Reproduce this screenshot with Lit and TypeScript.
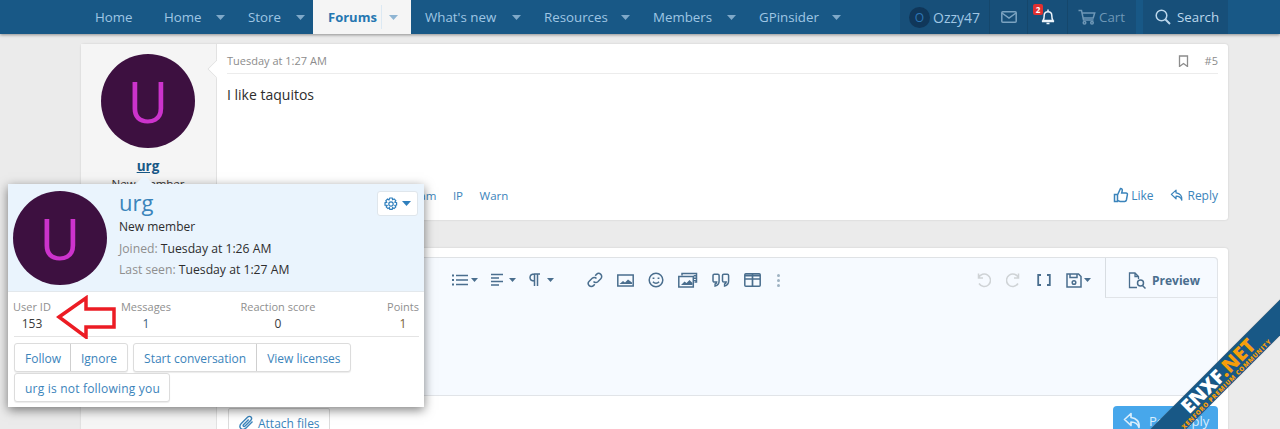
import { LitElement, html, css, svg } from "lit";
import { customElement } from "lit/decorators.js";

const caret = html`<svg class="caret" width="9" height="5" viewBox="0 0 9 5"><path d="M0 0h9L4.5 5z" fill="currentColor"/></svg>`;
const tcaret = html`<svg class="tcaret" width="7" height="4" viewBox="0 0 7 4"><path d="M0 0h7L3.5 4z" fill="currentColor"/></svg>`;
const ic = (w: number, h: number, body: unknown, cls = "") => html`<svg class=${cls} width=${w} height=${h} viewBox="0 0 ${w} ${h}" fill="none" stroke="currentColor" stroke-width="1.5">${body}</svg>`;

const NAV = [
  { t: "Home", w: 39, c: false },
  { t: "Home", w: 38, c: true },
  { t: "Store", w: 34, c: true },
];
const NAV2 = [
  { t: "What's new", w: 73 },
  { t: "Resources", w: 63 },
  { t: "Members", w: 60 },
  { t: "GPinsider", w: 59 },
];

const avatar = () => html`<div class="avatar"><span>U</span></div>`;

@customElement("app-root")
export class AppRoot extends LitElement {
  static styles = css`
    :host { display: block; width: 1280px; height: 429px; overflow: hidden; position: relative; background: #ebebeb; font-family: "Open Sans", "Noto Sans", sans-serif; font-size: 12px; color: #3a3a3a; }
    a { color: #3b84bb; text-decoration: none; }
    svg { display: block; flex: none; }

    nav { height: 34px; background: #185886; display: flex; padding-left: 80px; box-shadow: 0 1px 3px rgba(0,0,0,.4); position: relative; z-index: 1; color: #9fc6e4; font-size: 13.3px; }
    .item { display: flex; align-items: center; padding: 0 15px; white-space: nowrap; }
    .item .lab { display: block; }
    .item .caret { color: #7fa9c9; margin-left: 14px; margin-right: -7px; }
    .active { background: #f5f5f5; color: #2577b1; font-weight: 700; display: flex; align-items: center; width: 98px; padding-left: 15px; box-sizing: border-box; font-size: 13px; margin-right: -1px; }
    .active .sep { width: 1px; height: 24px; background: #dce9f3; margin-left: 4px; }
    .active .caret { color: #8fb5d3; margin-left: 7px; }
    .spacer { flex: 1; }
    .right { display: flex; margin-right: 52px; }
    .acct { display: flex; background: #174f79; height: 34px; margin-right: 7px; color: #9fc6e4; }
    .cell { display: flex; align-items: center; box-sizing: border-box; height: 34px; position: relative; }
    .who { width: 90px; padding-left: 9px; gap: 3px; border-right: 1px solid #15476c; font-size: 14px; }
    .mini { width: 21px; height: 21px; border-radius: 50%; background: #10375a; color: #2e76b6; font-size: 12px; display: flex; align-items: center; justify-content: center; }
    .mail { width: 38px; justify-content: center; color: #7ba3c1; border-right: 1px solid #15476c; }
    .bell { width: 40px; justify-content: center; color: #eef5fb; border-right: 1px solid #15476c; }
    .badge { position: absolute; left: 5px; top: 4px; width: 10px; height: 11px; border-radius: 2px; background: #e03030; color: #fff; font-size: 8px; font-weight: 700; line-height: 11px; text-align: center; }
    .cart { width: 68px; padding-left: 10px; gap: 3px; color: #6e97b6; }
    .search { width: 85px; height: 34px; background: #174f79; display: flex; align-items: center; padding-left: 12px; box-sizing: border-box; gap: 6px; color: #bcd7ec; }

    .card { position: absolute; left: 81px; width: 1147px; background: #fff; display: flex; border-radius: 3px; box-shadow: 0 0 2px rgba(0,0,0,.15); }
    .c1 { top: 44px; height: 176px; }
    .c2 { top: 248px; height: 190px; }
    .side { width: 136px; background: #f5f5f5; border-right: 1px solid #e2e2e2; position: relative; flex: none; display: flex; flex-direction: column; align-items: center; padding: 10px 1px 0 0; box-sizing: border-box; }
    .side::after { content: ""; position: absolute; right: -8px; top: 18px; width: 14px; height: 14px; background: #fff; transform: rotate(45deg); border-left: 1px solid #e2e2e2; border-bottom: 1px solid #e2e2e2; box-sizing: border-box; clip-path: polygon(0 0, 0 100%, 100% 100%); }
    .avatar { border-radius: 50%; background: #3d1040; display: flex; align-items: center; justify-content: center; width: 94px; height: 94px; flex: none; }
    .avatar span { color: #cc33cc; font-size: 56px; line-height: 1; }
    .name { margin-top: 8px; color: #185886; font-weight: 700; font-size: 13.5px; text-decoration: underline; line-height: 20px; }
    .role { font-size: 11.5px; color: #333; line-height: 15px; }
    .body { flex: 1; padding: 0 10px; position: relative; display: flex; flex-direction: column; }
    .attr { display: flex; justify-content: space-between; align-items: center; height: 30px; padding-top: 4px; box-sizing: border-box; border-bottom: 1px solid #ececec; color: #8c8c8c; font-size: 11px; }
    .attr .r { display: flex; align-items: center; gap: 16px; }
    .txt { font-size: 14px; color: #2d2d2d; margin-top: 11px; line-height: 20px; }
    .foot { margin-top: auto; display: flex; justify-content: space-between; align-items: center; height: 20px; margin-bottom: 15px; font-size: 11.5px; color: #3b84bb; }
    .foot .l { display: flex; gap: 16.5px; margin-left: 179px; }
    .foot .rr { display: flex; gap: 17px; font-size: 12px; }
    .foot .a { display: flex; gap: 2px; align-items: center; }

    .editor { position: absolute; left: 146px; top: 10px; width: 991px; height: 138px; border: 1px solid #e1e4e8; border-width: 0 1px 1px 1px; box-sizing: border-box; background: #f6faff; border-radius: 4px 4px 0 0; box-shadow: 0 -1px 0 #dfe2e5; color: #4a6e8e; }
    .bar { position: relative; display: flex; align-items: center; height: 40px; box-sizing: border-box; padding: 4px 0 0 223px; }
    .grp { display: flex; align-items: center; }
    .tb { display: flex; align-items: center; gap: 3px; }
    .tb.wide { gap: 6px; }
    .tcaret { color: #4a6e8e; }
    .g1 { gap: 13px; }
    .g2 { gap: 14px; margin-left: 33px; }
    .dots { display: flex; flex-direction: column; gap: 2px; margin-left: 2px; }
    .dots i { width: 3px; height: 3px; border-radius: 50%; background: #9fb2c2; display: block; }
    .g3 { position: absolute; right: 126px; top: 4px; height: 36px; gap: 15px; }
    .off { color: #cfd3d6; }
    .g3 .tb { gap: 2px; }
    .tab { position: absolute; right: 0; top: 0; width: 112px; height: 40px; padding: 6px 0 0 22px; border-left: 1px solid #d8dde2; border-bottom: 1px solid #e1e4e8; box-sizing: border-box; display: flex; align-items: center; gap: 5px; font-weight: 700; font-size: 12px; color: #4a6e8e; }
    .btns { position: absolute; left: 147px; right: 10px; top: 158px; display: flex; justify-content: space-between; align-items: flex-start; }
    .attach { display: flex; align-items: center; gap: 4px; border: 1px solid #dcdcdc; border-radius: 2px; height: 30px; width: 102px; box-sizing: border-box; padding-left: 10px; margin-top: 2px; color: #3b84bb; font-size: 12px; background: #fff; }
    .post { display: flex; align-items: center; gap: 6px; width: 105px; height: 30px; border-radius: 4px; background: #47a7eb; color: #d9eefc; padding-left: 10px; box-sizing: border-box; font-size: 13px; }

    .pop { position: absolute; left: 8px; top: 184px; width: 416px; height: 223px; background: #fff; box-shadow: 0 3px 10px rgba(0,0,0,.5); display: flex; flex-direction: column; z-index: 2; }
    .pop::before { content: ""; position: absolute; left: 130px; top: -6px; width: 13px; height: 13px; background: #eaf4fd; transform: rotate(45deg); }
    .phead { height: 108px; background: #eaf4fd; border-bottom: 1px solid #e3e8ec; box-sizing: border-box; display: flex; padding: 7px 5px; position: relative; }
    .pinfo { margin-left: 12px; display: flex; flex-direction: column; }
    .pname { color: #3b84bb; font-size: 22px; line-height: 24px; margin-top: -1px; }
    .prole { font-size: 12px; color: #2d2d2d; line-height: 20px; margin-top: 3px; }
    .pline { font-size: 12.2px; line-height: 18px; color: #8f8f8f; margin-top: 3px; }
    .pline b { font-weight: 400; color: #2d2d2d; }
    .gear { position: absolute; right: 6px; top: 7px; width: 41px; height: 25px; border-radius: 3px; background: #fff; border: 1px solid #dfe6ec; box-sizing: border-box; display: flex; align-items: center; justify-content: center; gap: 4px; color: #2f7fbd; }
    .stats { display: flex; margin: 0 5px 0 6px; padding-top: 7px; height: 45px; border-bottom: 1px solid #e4e4e4; box-sizing: border-box; font-size: 11px; color: #8f8f8f; }
    .stat { display: flex; flex-direction: column; align-items: center; line-height: 16px; white-space: nowrap; flex: none; }
    .stat span:last-child { font-size: 12px; color: #3a3a3a; margin-top: 1px; }
    .stat .blue { color: #3a5f80 !important; }
    .stat .gold { color: #7a5f35 !important; }
    .s1 { width: 36px; }
    .s2 { width: 50px; margin-left: 71px; }
    .s3 { width: 76px; margin-left: 69px; }
    .s4 { width: 32px; margin-left: 71px; }
    .rows { margin: 6px 6px 0; display: flex; flex-direction: column; gap: 1px; }
    .row { display: flex; gap: 5px; }
    .bgroup { display: flex; border: 1px solid #dcdcdc; border-radius: 3px; height: 29px; box-sizing: border-box; background: #fff; box-shadow: 0 1px 1px rgba(0,0,0,.08); }
    .bgroup a { display: flex; align-items: center; padding: 2px 10px 0; font-size: 12px; color: #3b84bb; border-right: 1px solid #cfcfcf; white-space: nowrap; }
    .bgroup a:last-child { border: 0; }
    .bgroup a.tight { padding-right: 9px; }
    .bgroup a.wide { letter-spacing: .2px; padding-right: 9px; }
    .bgroup a.end { padding-right: 9px; }

    .arrow { position: absolute; left: 56px; top: 295px; z-index: 3; }

    .ribbon { position: absolute; left: 1105px; top: 365px; width: 230px; height: 25px; background: #185886; transform: rotate(-45deg); z-index: 4; box-shadow: 0 0 1px #555; display: flex; flex-direction: column; align-items: center; font-weight: 800; overflow: hidden; }
    .rib1 { font-size: 19.5px; line-height: 19px; color: #fff; }
    .rib1 span { color: #f59e0b; }
    .rib2 { font-size: 6.3px; line-height: 6px; color: #f59e0b; letter-spacing: .7px; white-space: nowrap; }
  `;

  render() {
    const thumb = ic(16, 16, svg`<path d="M1.5 7.5h3v7h-3zM4.5 8l3-6.5c1.5 0 2 1 1.7 2.3L8.7 6H13c1 0 1.6.8 1.4 1.7l-1 5.3c-.2.9-.8 1.4-1.7 1.4H7l-2.5-1" />`);
    const reply = (w: number, h: number) => html`<svg width=${w} height=${h} viewBox="0 0 20 18" fill="none" stroke="currentColor" stroke-width="1.7" stroke-linejoin="round"><path d="M8 1.5 1.5 7.5 8 13.5V10c4 0 6.5 1 8 5.5.8-5.5-2.5-9.5-8-10z"/></svg>`;
    return html`
      <nav>
        ${NAV.map(n => html`<div class="item"><span class="lab" style="width:${n.w}px">${n.t}</span>${n.c ? caret : ""}</div>`)}
        <div class="active"><span class="lab">Forums</span><span class="sep"></span>${caret}</div>
        ${NAV2.map(n => html`<div class="item"><span class="lab" style="width:${n.w}px">${n.t}</span>${caret}</div>`)}
        <div class="spacer"></div>
        <div class="right">
          <div class="acct">
            <div class="cell who"><span class="mini">O</span><span>Ozzy47</span></div>
            <div class="cell mail">${ic(16, 12, svg`<rect x=".8" y=".8" width="14.4" height="10.4" rx="1"/><path d="M1 2l7 5 7-5"/>`)}</div>
            <div class="cell bell"><span class="badge">2</span>${ic(14, 16, svg`<path d="M2 11.5c1.2-1.5 1.2-3 1.2-5 0-2.2 1.5-3.8 3.8-3.8s3.8 1.6 3.8 3.8c0 2 0 3.5 1.2 5zM1 12.5h12M5.5 14.5h3M7 .5v2"/>`)}</div>
            <div class="cell cart">${ic(18, 16, svg`<path d="M.5 1.5h3l2 9.500h10M4.200 4h12.500l-1.500 5H5.200"/><circle cx="6.500" cy="13.700" r="1.300"/><circle cx="14" cy="13.700" r="1.300"/>`)}<span>Cart</span></div>
          </div>
          <div class="search">${ic(16, 16, svg`<circle cx="6.500" cy="6.500" r="5.300"/><path d="M10.500 10.500 15 15" stroke-width="2"/>`)}<span>Search</span></div>
        </div>
      </nav>

      <section class="card c1">
        <div class="side">
          ${avatar()}
          <a class="name">urg</a>
          <div class="role">New member</div>
        </div>
        <div class="body">
          <div class="attr"><span>Tuesday at 1:27 AM</span><span class="r">${ic(11, 12, svg`<path d="M1.500 1h8v10.500l-4-3-4 3z" stroke-width="1.300"/>`)}<span>#5</span></span></div>
          <div class="txt">I like taquitos</div>
          <div class="foot">
            <div class="l"><a>Spam</a><a>IP</a><a>Warn</a></div>
            <div class="rr"><a class="a">${thumb}Like</a><a class="a">${reply(15, 13)}Reply</a></div>
          </div>
        </div>
      </section>

      <section class="card c2">
        <div class="side"></div>
        <div class="editor">
          <div class="bar">
            <div class="grp g1">
              <span class="tb">${ic(17, 14, svg`<path d="M5 2.500h12M5 7h12M5 11.500h12" stroke-width="1.600"/><path d="M1 2.500h2M1 7h2M1 11.500h2" stroke-width="2.200"/>`)}${tcaret}</span>
              <span class="tb">${ic(15, 14, svg`<path d="M0 1.500h12M0 5h8M0 8.500h12M0 12h8" stroke-width="1.500"/>`)}${tcaret}</span>
              <span class="tb wide">${ic(12, 14, svg`<path d="M5.500 13V1h5.500M8.500 13V1M5.500 8C2.500 8 1 6.500 1 4.500S2.500 1 5.500 1" stroke-width="1.500"/>`)}${tcaret}</span>
            </div>
            <div class="grp g2">
              ${ic(16, 16, svg`<path d="M6.500 9.500a3 3 0 0 0 4.300.2l3-3A3 3 0 0 0 9.500 2.400L8.200 3.700M9.500 6.500a3 3 0 0 0-4.300-.2l-3 3a3 3 0 0 0 4.300 4.300l1.300-1.300"/>`)}
              ${ic(17, 13, svg`<rect x=".8" y="1" width="15.400" height="11"/><path d="M2.500 10l3.500-3 2 1.500 3-3 4 3v1.500z" fill="currentColor" stroke="none"/>`)}
              ${ic(16, 16, svg`<circle cx="8" cy="8" r="6.800"/><path d="M5 9.800c1.500 2 4.500 2 6 0"/><path d="M5.500 5.500v1.500M10.500 5.500v1.500" stroke-width="1.800"/>`)}
              ${ic(20, 16, svg`<rect x=".8" y="4.500" width="14.500" height="10.500"/><path d="M3 13l3.500-3.500 2 1.500 3-3 3 3v2z" fill="currentColor" stroke="none"/><path d="M4 3.500V1.500h14.500v8.500h-2"/><path d="M17 3v6" stroke-dasharray="1.500 1" stroke-width="2.500"/>`)}
              ${ic(18, 14, svg`<path d="M1 2.500c0-.8.600-1.300 1.300-1.300h3.500c.8 0 1.300.5 1.300 1.300V8c0 2.700-1.500 4.500-4 5v-2c1-.3 1.500-.8 1.600-2H2.300C1.600 9 1 8.500 1 7.700zM10.500 2.500c0-.8.600-1.300 1.300-1.300h3.500c.8 0 1.300.5 1.300 1.300V8c0 2.700-1.500 4.500-4 5v-2c1-.3 1.500-.8 1.600-2h-2.400c-.7 0-1.300-.5-1.300-1.300z"/>`)}
              ${ic(17, 14, svg`<rect x=".8" y=".8" width="15.400" height="12.400" rx="1"/><path d="M8.500 1v12M1 6h15" stroke-width="1.700"/><path d="M1 2.500h15" stroke-width="2"/>`)}
              <span class="dots"><i></i><i></i><i></i></span>
            </div>
            <div class="grp g3">
              <span class="off">${ic(16, 16, svg`<path d="M3.500 1.500v4.500H8M3.500 6A6.200 6.200 0 1 1 4 11.500"/>`)}</span>
              <span class="off">${ic(16, 16, svg`<path d="M12.500 1.500v4.500H8M12.500 6A6.200 6.200 0 1 0 12 11.500"/>`)}</span>
              ${ic(14, 12, svg`<path d="M4 1H1.200v10H4M10 1h2.800v10H10" stroke-width="1.800"/>`)}
              <span class="tb">${ic(16, 15, svg`<path d="M1 1h11.500L15 3.500V14H1z"/><path d="M4 1v3.500h7V1"/><circle cx="8" cy="9.500" r="1.800"/>`)}${tcaret}</span>
            </div>
            <div class="tab">${ic(19, 17, svg`<path d="M9 15.500H1.500V1H7l3.500 3.500V7M7 1v3.500h3.500" stroke-width="1.300"/><circle cx="12.500" cy="11" r="3"/><path d="M14.500 13.500l3 3"/>`)}<span>Preview</span></div>
          </div>
        </div>
        <div class="btns">
          <a class="attach">${ic(15, 16, svg`<path d="M13.500 6.500 7 13c-1.700 1.700-4 1.800-5.200.5S.8 10 2.500 8.300l6-6c1.200-1.200 2.700-1.200 3.500-.3s.8 2.300-.4 3.500l-5.500 5.500c-.6.600-1.300.6-1.700.2s-.3-1.100.3-1.700l5-5" stroke-width="1.400"/>`)}Attach files</a>
          <div class="post">${reply(20, 18)}<span>Post reply</span></div>
        </div>
      </section>

      <aside class="pop">
        <div class="phead">
          ${avatar()}
          <div class="pinfo">
            <a class="pname">urg</a>
            <div class="prole">New member</div>
            <div class="pline">Joined: <b>Tuesday at 1:26 AM</b></div>
            <div class="pline">Last seen: <b>Tuesday at 1:27 AM</b></div>
          </div>
          <div class="gear">
            ${ic(14, 14, svg`<circle cx="7" cy="7" r="2.200" stroke-width="1.200"/><path d="M5.800 1h2.400l.4 1.700 1.500-.8 1.700 1.700-.9 1.500 1.700.5v2.400l-1.700.4.900 1.500-1.700 1.700-1.500-.9-.4 1.700H5.800l-.4-1.700-1.500.9-1.700-1.700.9-1.500L1 8.200V5.800l1.700-.5-.9-1.500 1.700-1.700 1.500.8z" stroke-width="1.200"/>`)}
            ${caret}
          </div>
        </div>
        <div class="stats">
          <div class="stat s1"><span>User ID</span><span>153</span></div>
          <div class="stat s2"><span>Messages</span><span class="blue">1</span></div>
          <div class="stat s3"><span>Reaction score</span><span>0</span></div>
          <div class="stat s4"><span>Points</span><span class="gold">1</span></div>
        </div>
        <div class="rows">
          <div class="row">
            <div class="bgroup"><a class="tight">Follow</a><a>Ignore</a></div>
            <div class="bgroup"><a>Start conversation</a><a class="end">View licenses</a></div>
          </div>
          <div class="row"><div class="bgroup"><a class="wide">urg is not following you</a></div></div>
        </div>
      </aside>

      <svg class="arrow" width="62" height="44" viewBox="0 0 62 44" fill="#fff" stroke="#ec1c24" stroke-width="3.5"><path d="M3 22 30 3v11h28v18H30v10z"/></svg>

      <div class="ribbon">
        <div class="rib1">ENXF<span>.NET</span></div>
        <div class="rib2">XENFORO PREMIUM COMMUNITY</div>
      </div>
    `;
  }
}
